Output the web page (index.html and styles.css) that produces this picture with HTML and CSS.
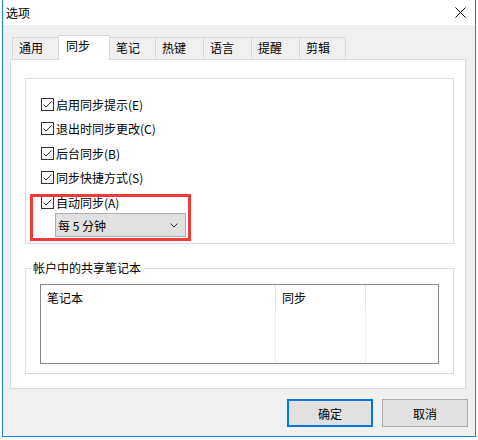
FILE: index.html
```html
<!DOCTYPE html>
<html lang="zh-CN">
<head>
    <meta charset="UTF-8">
    <title>选项</title>
    <link rel="stylesheet" href="styles.css">
</head>
<body>

    <div class="window">
        <div class="titlebar">
            <span class="title">选项</span>
            <svg class="close" width="11" height="11" viewBox="0 0 11 11">
                <path d="M0.5 0.5 L10.5 10.5 M10.5 0.5 L0.5 10.5" stroke="#000" stroke-width="1" fill="none"/>
            </svg>
        </div>

        <div class="client">
            <div class="tabs">
                <div class="tab narrow">通用</div>
                <div class="tab active">同步</div>
                <div class="tab narrow">笔记</div>
                <div class="tab">热键</div>
                <div class="tab">语言</div>
                <div class="tab">提醒</div>
                <div class="tab narrow">剪辑</div>
            </div>

            <div class="panel">
                <div class="group">
                    <div class="check">
                        <svg width="13" height="13" viewBox="0 0 13 13"><rect x="0.5" y="0.5" width="12" height="12" fill="#fff" stroke="#333"/><path d="M2.5 6.5 L5 9 L10.5 3.5" stroke="#333" fill="none"/></svg>
                        <span>启用同步提示(E)</span>
                    </div>
                    <div class="check">
                        <svg width="13" height="13" viewBox="0 0 13 13"><rect x="0.5" y="0.5" width="12" height="12" fill="#fff" stroke="#333"/><path d="M2.5 6.5 L5 9 L10.5 3.5" stroke="#333" fill="none"/></svg>
                        <span>退出时同步更改(C)</span>
                    </div>
                    <div class="check">
                        <svg width="13" height="13" viewBox="0 0 13 13"><rect x="0.5" y="0.5" width="12" height="12" fill="#fff" stroke="#333"/><path d="M2.5 6.5 L5 9 L10.5 3.5" stroke="#333" fill="none"/></svg>
                        <span>后台同步(B)</span>
                    </div>
                    <div class="check">
                        <svg width="13" height="13" viewBox="0 0 13 13"><rect x="0.5" y="0.5" width="12" height="12" fill="#fff" stroke="#333"/><path d="M2.5 6.5 L5 9 L10.5 3.5" stroke="#333" fill="none"/></svg>
                        <span>同步快捷方式(S)</span>
                    </div>
                    <div class="check">
                        <svg width="13" height="13" viewBox="0 0 13 13"><rect x="0.5" y="0.5" width="12" height="12" fill="#fff" stroke="#333"/><path d="M2.5 6.5 L5 9 L10.5 3.5" stroke="#333" fill="none"/></svg>
                        <span>自动同步(A)</span>
                    </div>
                    <div class="select">
                        <span>每 5 分钟</span>
                        <svg width="8" height="5" viewBox="0 0 8 5"><path d="M0.5 0.5 L4 4 L7.5 0.5" stroke="#333" fill="none"/></svg>
                    </div>
                </div>

                <fieldset class="shared">
                    <legend>帐户中的共享笔记本</legend>
                    <div class="list">
                        <div class="head">笔记本</div>
                        <div class="head">同步</div>
                        <div class="head last"></div>
                        <div class="cell"></div>
                        <div class="cell"></div>
                        <div class="cell last"></div>
                    </div>
                </fieldset>
            </div>

            <div class="buttons">
                <button class="btn default">确定</button>
                <button class="btn">取消</button>
            </div>
        </div>
    </div>

    <!-- red annotation frame drawn over the dialog -->
    <div class="highlight"></div>

</body>
</html>
```

FILE: styles.css
```css
* {
    box-sizing: border-box;
}

body {
    margin: 0;
    background-color: #fff;
    font-family: "Noto Sans CJK SC", sans-serif;
    font-size: 12px;
    color: #000;
}

.window {
    width: 474px;
    height: 438px;
    margin: -1px 0 0 2px;
    border: 1px solid #1883d7;
    background-color: #f0f0f0;
}

.titlebar {
    height: 25px;
    background-color: #fff;
    display: flex;
    align-items: center;
    padding: 0 9px 0 3px;
}

.titlebar .title {
    flex: 1;
}

.client {
    padding: 10px 9px 0 7px;
}

.tabs {
    display: flex;
    align-items: flex-end;
    height: 24px;
    padding-left: 2px;
}

.tab {
    width: 49px;
    height: 22px;
    border: 1px solid #d9d9d9;
    border-bottom: none;
    margin-right: -1px;
    padding-left: 6px;
    line-height: 20px;
}

.tab.narrow {
    width: 47px;
}

.tab.active {
    width: 52px;
    height: 25px;
    margin-bottom: -1px;
    padding-left: 7px;
    background-color: #fff;
    position: relative;
    z-index: 1;
}

.panel {
    height: 330px;
    border: 1px solid #d9d9d9;
    background-color: #fff;
    padding: 18px 11px 0 14px;
}

.group {
    height: 166px;
    border: 1px solid #dcdcdc;
    padding: 13px 0 0 15px;
}

.check {
    display: flex;
    align-items: center;
    height: 24.5px;
}

.check svg {
    flex: none;
    margin-right: 2px;
}

.select {
    width: 131px;
    height: 24px;
    margin: -1.5px 0 0 14px;
    border: 1px solid #adadad;
    background-color: #e1e1e1;
    display: flex;
    align-items: center;
    justify-content: space-between;
    padding: 0 7px 0 2px;
}

.shared {
    margin: 17px 0 0;
    padding: 0 14px 9px;
    border: 1px solid #dcdcdc;
    min-width: 0;
}

.shared legend {
    margin-left: -9px;
    padding: 0 2px;
    line-height: 14px;
}

.list {
    margin-top: 9px;
    height: 80px;
    border: 1px solid #828790;
    display: grid;
    grid-template-columns: 235px 90px 1fr;
    grid-template-rows: 25px 1fr;
}

.list .head {
    border-right: 1px solid #e5e5e5;
    padding-left: 6px;
    line-height: 26px;
}

.list .cell {
    border-right: 1px solid #eaf0f9;
}

.list .last {
    border-right: none;
}

.buttons {
    display: flex;
    justify-content: flex-end;
    gap: 9px;
    margin: 10px -2px 0 0;
}

.btn {
    width: 86px;
    height: 28px;
    padding: 0;
    font-family: inherit;
    font-size: 12px;
    color: #000;
    background-color: #e1e1e1;
    border: 1px solid #adadad;
}

.btn.default {
    border: 2px solid #0078d7;
}

.highlight {
    position: absolute;
    left: 30px;
    top: 194px;
    width: 161px;
    height: 47px;
    border: 3px solid #f03a3a;
}
```
